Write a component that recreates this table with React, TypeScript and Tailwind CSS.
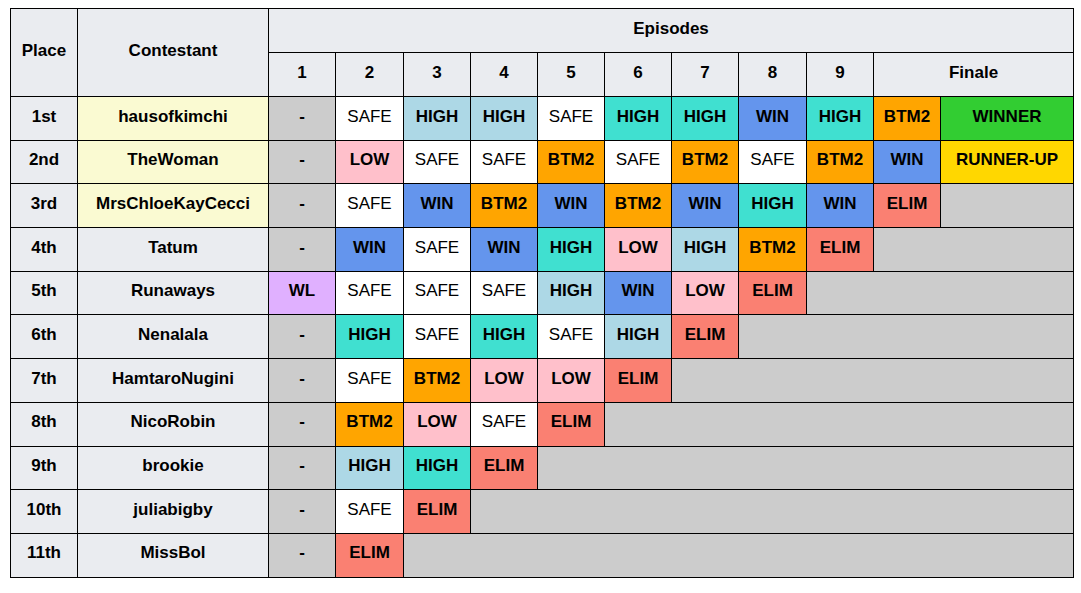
import React from "react";

type Result = "-" | "WL" | "SAFE" | "HIGH" | "TOP" | "WIN" | "LOW" | "BTM2" | "ELIM" | "WINNER" | "RUNNER-UP";

// HIGH comes in two shades: lightblue ("HIGH") and turquoise ("TOP", shown as HIGH)
const styles: Record<Result, string> = {
  "-": "bg-[#cccccc] font-bold",
  WL: "bg-[#e0b0ff] font-bold",
  SAFE: "bg-white font-normal",
  HIGH: "bg-[#add8e6] font-bold",
  TOP: "bg-[#40e0d0] font-bold",
  WIN: "bg-[#6495ed] font-bold",
  LOW: "bg-[#ffc0cb] font-bold",
  BTM2: "bg-[#ffa500] font-bold",
  ELIM: "bg-[#fa8072] font-bold",
  WINNER: "bg-[#32cd32] font-bold",
  "RUNNER-UP": "bg-[#ffd700] font-bold",
};

type Row = { place: string; name: string; top?: boolean; results: Result[] };

const rows: Row[] = [
  { place: "1st", name: "hausofkimchi", top: true, results: ["-", "SAFE", "HIGH", "HIGH", "SAFE", "TOP", "TOP", "WIN", "TOP", "BTM2", "WINNER"] },
  { place: "2nd", name: "TheWoman", top: true, results: ["-", "LOW", "SAFE", "SAFE", "BTM2", "SAFE", "BTM2", "SAFE", "BTM2", "WIN", "RUNNER-UP"] },
  { place: "3rd", name: "MrsChloeKayCecci", top: true, results: ["-", "SAFE", "WIN", "BTM2", "WIN", "BTM2", "WIN", "TOP", "WIN", "ELIM"] },
  { place: "4th", name: "Tatum", results: ["-", "WIN", "SAFE", "WIN", "TOP", "LOW", "HIGH", "BTM2", "ELIM"] },
  { place: "5th", name: "Runaways", results: ["WL", "SAFE", "SAFE", "SAFE", "HIGH", "WIN", "LOW", "ELIM"] },
  { place: "6th", name: "Nenalala", results: ["-", "TOP", "SAFE", "TOP", "SAFE", "HIGH", "ELIM"] },
  { place: "7th", name: "HamtaroNugini", results: ["-", "SAFE", "BTM2", "LOW", "LOW", "ELIM"] },
  { place: "8th", name: "NicoRobin", results: ["-", "BTM2", "LOW", "SAFE", "ELIM"] },
  { place: "9th", name: "brookie", results: ["-", "HIGH", "TOP", "ELIM"] },
  { place: "10th", name: "juliabigby", results: ["-", "SAFE", "ELIM"] },
  { place: "11th", name: "MissBol", results: ["-", "ELIM"] },
];

// place, contestant, episodes 1-9, two finale columns
const widths = [67, 191, 67, 68, 67, 67, 67, 67, 67, 68, 67, 67, 133];
const resultCols = 11;

const cell = "border border-black text-center align-middle px-0 pt-0 pb-[4px]";

export default function App() {
  return (
    <div className="bg-white min-h-screen pl-[10px] pt-[8px] text-black font-['Liberation_Sans',Arial,sans-serif] text-[17px]">
      <table className="w-[1064px] table-fixed border-collapse border border-black">
        <colgroup>
          {widths.map((w, i) => (
            <col key={i} style={{ width: w }} />
          ))}
        </colgroup>
        <thead>
          <tr className="h-[44px] bg-[#eaecf0]">
            <th rowSpan={2} className={cell}>Place</th>
            <th rowSpan={2} className={cell}>Contestant</th>
            <th colSpan={11} className={cell}>Episodes</th>
          </tr>
          <tr className="h-[44px] bg-[#eaecf0]">
            {[1, 2, 3, 4, 5, 6, 7, 8, 9].map((n) => (
              <th key={n} className={cell}>{n}</th>
            ))}
            <th colSpan={2} className={cell}>Finale</th>
          </tr>
        </thead>
        <tbody>
          {rows.map((r) => {
            const rest = resultCols - r.results.length;
            return (
              <tr key={r.place} className="h-[43.7px]">
                <td className={`${cell} bg-[#eaecf0] font-bold`}>{r.place}</td>
                <td className={`${cell} font-bold ${r.top ? "bg-[#fafad2]" : "bg-[#eaecf0]"}`}>{r.name}</td>
                {r.results.map((res, i) => (
                  <td key={i} className={`${cell} ${styles[res]}`}>
                    {res === "TOP" ? "HIGH" : res}
                  </td>
                ))}
                {rest > 0 && <td colSpan={rest} className={`${cell} bg-[#cccccc]`} />}
              </tr>
            );
          })}
        </tbody>
      </table>
    </div>
  );
}
